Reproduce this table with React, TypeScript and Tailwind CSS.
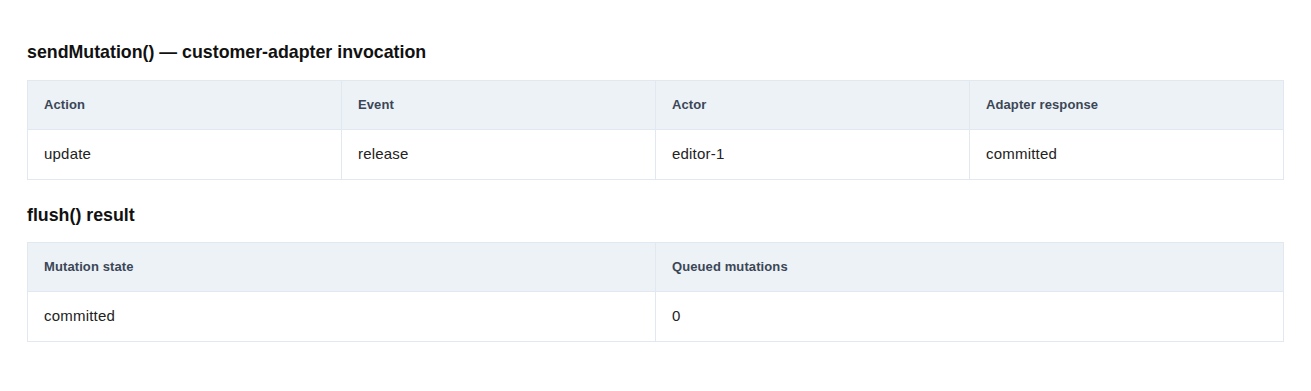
import React from "react";

function Table({ headers, rows }: { headers: string[]; rows: string[][] }) {
  return (
    <table className="w-full table-fixed border-collapse border border-[#e2e8f0]">
      <thead>
        <tr className="bg-[#edf2f7]">
          {headers.map((h) => (
            <th
              key={h}
              className="h-[49px] border border-[#e2e8f0] px-4 text-left text-[13px] font-bold tracking-[0.1px] text-[#3b4656]"
            >
              {h}
            </th>
          ))}
        </tr>
      </thead>
      <tbody>
        {rows.map((r, i) => (
          <tr key={i} className="bg-white">
            {r.map((c, j) => (
              <td
                key={j}
                className="h-[50px] border border-[#e2e8f0] px-4 text-left text-[15px] tracking-[0.2px] text-[#222222]"
              >
                {c}
              </td>
            ))}
          </tr>
        ))}
      </tbody>
    </table>
  );
}

export default function App() {
  return (
    <div
      className="w-[1311px] h-[391px] bg-white px-[27px] pt-[42px]"
      style={{ fontFamily: '"Liberation Sans", Arial, sans-serif' }}
    >
      <h2 className="mb-[17px] text-[17.8px] font-bold leading-[21px] text-[#111111]">
        sendMutation() — customer-adapter invocation
      </h2>
      <Table
        headers={["Action", "Event", "Actor", "Adapter response"]}
        rows={[["update", "release", "editor-1", "committed"]]}
      />
      <h2 className="mt-[25px] mb-[16px] text-[17.8px] font-bold leading-[21px] text-[#111111]">
        flush() result
      </h2>
      <Table headers={["Mutation state", "Queued mutations"]} rows={[["committed", "0"]]} />
    </div>
  );
}
